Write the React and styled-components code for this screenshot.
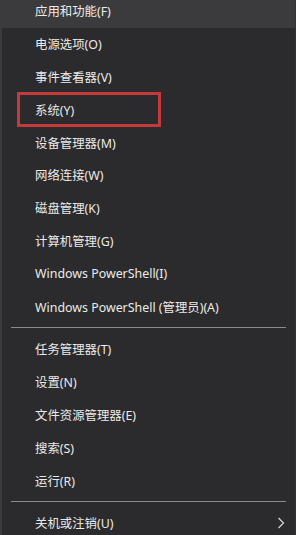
import React from "react";
import styled, { createGlobalStyle } from "styled-components";

const GlobalStyle = createGlobalStyle`
  html, body {
    margin: 0;
    padding: 0;
    background: #2b2a2c;
  }
  #root {
    width: 296px;
    height: 535px;
    overflow: hidden;
  }
`;

const Menu = styled.nav`
  width: 296px;
  height: 535px;
  box-sizing: border-box;
  background: #2b2a2c;
  border-left: 2px solid #3b3b3d;
  border-right: 1px solid #323234;
  overflow: hidden;
  font-family: "Noto Sans", "Noto Sans CJK SC", sans-serif;
`;

const List = styled.div`
  display: flex;
  flex-direction: column;
  margin-top: -5px;
`;

const Item = styled.div`
  position: relative;
  display: flex;
  align-items: center;
  justify-content: space-between;
  height: 32.8px;
  flex-shrink: 0;
  padding: 0 10px 0 33px;
  background: ${({ $hover }) => ($hover ? "#3b3a3c" : "transparent")};
  color: #eaeaea;
  font-size: 12.4px;
`;

const Label = styled.span`
  white-space: nowrap;
`;

const Marked = styled.span`
  position: absolute;
  left: 15px;
  top: -1px;
  width: 144px;
  height: 35px;
  box-sizing: border-box;
  border: 3px solid #c3393c;
  pointer-events: none;
`;

const Separator = styled.div`
  height: 1px;
  flex-shrink: 0;
  margin: 4px 9px 5px 9px;
  background: #8a8a8c;
`;

const Chevron = () => (
  <svg width="8" height="12" viewBox="0 0 8 12">
    <path d="M1.5 1 L6.5 6 L1.5 11" fill="none" stroke="#d8d8d8" strokeWidth="1.2" />
  </svg>
);

const groups = [
  [
    { label: "应用和功能(F)", hover: true },
    { label: "电源选项(O)" },
    { label: "事件查看器(V)" },
    { label: "系统(Y)", marked: true },
    { label: "设备管理器(M)" },
    { label: "网络连接(W)" },
    { label: "磁盘管理(K)" },
    { label: "计算机管理(G)" },
    { label: "Windows PowerShell(I)" },
    { label: "Windows PowerShell (管理员)(A)" },
  ],
  [
    { label: "任务管理器(T)" },
    { label: "设置(N)" },
    { label: "文件资源管理器(E)" },
    { label: "搜索(S)" },
    { label: "运行(R)" },
  ],
  [{ label: "关机或注销(U)", sub: true }],
];

export default function App() {
  return (
    <>
      <GlobalStyle />
      <Menu>
        <List>
          {groups.map((group, gi) => (
            <React.Fragment key={gi}>
              {gi > 0 && <Separator />}
              {group.map((item) => (
                <Item key={item.label} $hover={item.hover}>
                  <Label>{item.label}</Label>
                  {item.sub && <Chevron />}
                  {item.marked && <Marked />}
                </Item>
              ))}
            </React.Fragment>
          ))}
        </List>
      </Menu>
    </>
  );
}
